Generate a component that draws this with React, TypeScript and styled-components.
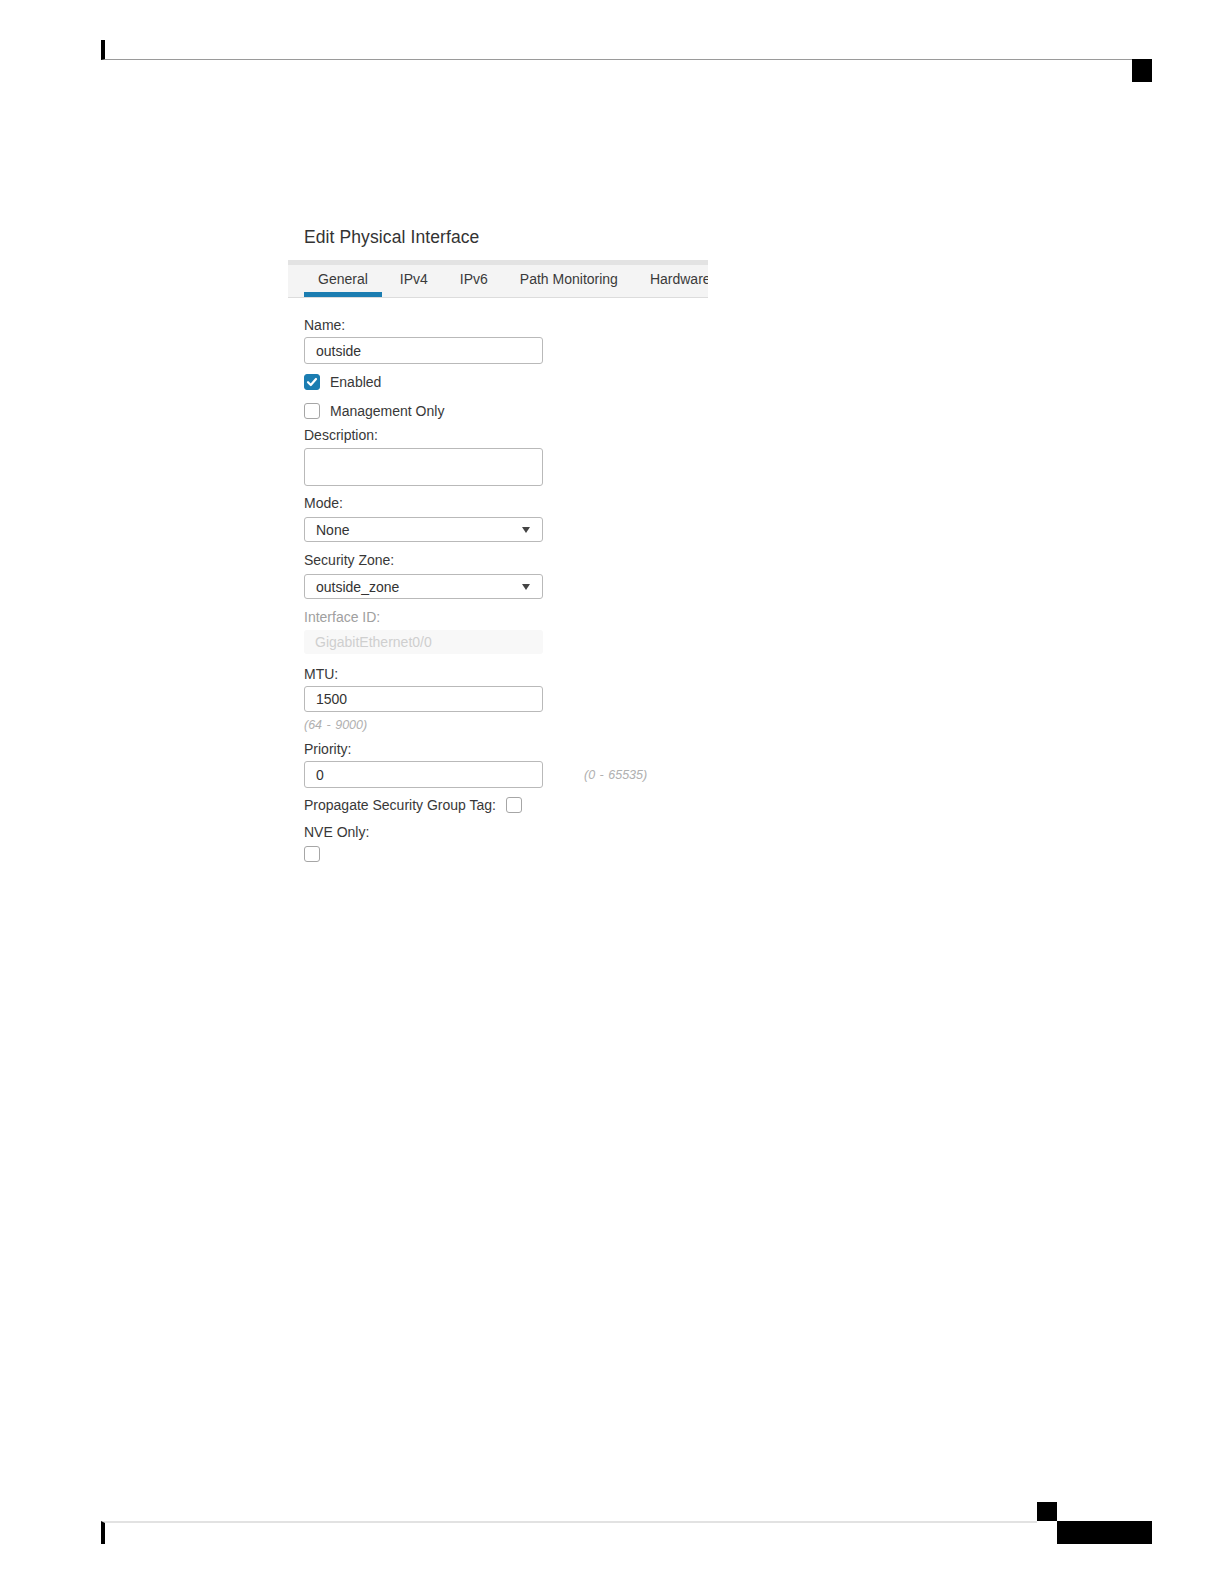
import React from "react";
import styled, { createGlobalStyle } from "styled-components";

const GlobalStyle = createGlobalStyle`
  html, body {
    margin: 0;
    padding: 0;
    background: #ffffff;
  }
  body {
    font-family: "Liberation Sans", Arial, sans-serif;
    color: #333333;
  }
  * { box-sizing: border-box; }
`;

const Page = styled.div`
  width: 1224px;
  min-height: 1584px;
  display: flex;
  flex-direction: column;
`;

const Header = styled.header`
  display: flex;
  align-items: flex-start;
  margin: 40px 72px 0 101px;
`;

const HeaderRule = styled.div`
  flex: 1;
  height: 20px;
  border-left: 4px solid #000;
  border-bottom: 1px solid #9a9a9a;
`;

const HeaderTab = styled.div`
  width: 20px;
  height: 23px;
  margin-top: 19px;
  background: #000;
`;

const Main = styled.main`
  flex: 1;
  padding: 145px 0 0 288px;
`;

const Dialog = styled.section`
  width: 420px;
`;

const Title = styled.h2`
  margin: 0 0 13px 16px;
  font-size: 17.5px;
  line-height: 20px;
  font-weight: 400;
  color: #333;
  letter-spacing: 0.1px;
`;

const TabBar = styled.nav`
  display: flex;
  gap: 4px;
  height: 38px;
  padding-left: 16px;
  background: #f4f4f4;
  border-top: 5px solid #e3e3e3;
  border-bottom: 1px solid #dcdcdc;
  overflow: hidden;
  white-space: nowrap;
`;

const Tab = styled.div<{ $active?: boolean }>`
  flex: none;
  display: flex;
  align-items: center;
  padding: 3px 14px 2px;
  height: 32px;
  font-size: 14px;
  color: #3a3a3a;
  border-bottom: 5px solid ${(p) => (p.$active ? "#1b7db1" : "transparent")};
`;

const Form = styled.div`
  display: flex;
  flex-direction: column;
  align-items: flex-start;
  padding: 19px 0 0 16px;
`;

const Label = styled.div<{ $mt?: number; $muted?: boolean }>`
  margin-top: ${(p) => p.$mt ?? 0}px;
  font-size: 14px;
  line-height: 16px;
  color: ${(p) => (p.$muted ? "#a0a0a0" : "#383838")};
`;

const TextBox = styled.div<{ $mt?: number; $h?: number }>`
  margin-top: ${(p) => p.$mt ?? 4}px;
  width: 239px;
  height: ${(p) => p.$h ?? 27}px;
  display: flex;
  align-items: center;
  padding: 0 11px;
  border: 1px solid #b9b9b9;
  border-radius: 3px;
  background: #fff;
  font-size: 14px;
  color: #333;
`;

const SelectBox = styled(TextBox)`
  justify-content: space-between;
  padding-right: 12px;
`;

const DisabledBox = styled.div<{ $mt?: number }>`
  margin-top: ${(p) => p.$mt ?? 5}px;
  width: 239px;
  height: 24px;
  display: flex;
  align-items: center;
  padding: 0 11px;
  background: #f8f8f8;
  border-radius: 3px;
  font-size: 14px;
  color: #cfcfcf;
`;

const CheckRow = styled.div<{ $mt?: number }>`
  margin-top: ${(p) => p.$mt ?? 0}px;
  display: flex;
  align-items: center;
  gap: 10px;
  font-size: 14px;
  line-height: 16px;
  color: #383838;
`;

const Box = styled.span<{ $checked?: boolean; $mt?: number }>`
  flex: none;
  margin-top: ${(p) => p.$mt ?? 0}px;
  width: 16px;
  height: 16px;
  border-radius: 3px;
  display: inline-flex;
  align-items: center;
  justify-content: center;
  border: 1px solid ${(p) => (p.$checked ? "#1b7db1" : "#a6a6a6")};
  background: ${(p) => (p.$checked ? "#1b7db1" : "#fff")};
`;

const Hint = styled.div<{ $mt?: number }>`
  margin-top: ${(p) => p.$mt ?? 0}px;
  font-size: 12.5px;
  line-height: 14px;
  font-style: italic;
  color: #b0b0b0;
  word-spacing: 1px;
`;

const FieldRow = styled.div<{ $mt?: number }>`
  margin-top: ${(p) => p.$mt ?? 0}px;
  display: flex;
  align-items: center;
  gap: 41px;
  & > ${TextBox} {
    margin-top: 0;
  }
`;

const Footer = styled.footer`
  display: flex;
  align-items: flex-start;
  margin: 0 72px 40px 101px;
`;

const FooterRule = styled.div`
  flex: 1;
  margin-top: 19px;
  height: 23px;
  border-left: 4px solid #000;
  border-top: 2px solid #e2e2e2;
`;

const FooterSquare = styled.div`
  width: 20px;
  height: 19px;
  background: #000;
`;

const FooterBlock = styled.div`
  width: 95px;
  height: 23px;
  margin-top: 19px;
  background: #000;
`;

const Check = () => (
  <svg width="12" height="12" viewBox="0 0 12 12">
    <path d="M2 6.2 L4.8 9 L10 3" fill="none" stroke="#fff" strokeWidth="2.2" strokeLinecap="round" strokeLinejoin="round" />
  </svg>
);

const Caret = () => (
  <svg width="8" height="6" viewBox="0 0 8 6">
    <path d="M0 0 H8 L4 6 Z" fill="#444" />
  </svg>
);

export default function App() {
  return (
    <Page>
      <GlobalStyle />
      <Header>
        <HeaderRule />
        <HeaderTab />
      </Header>
      <Main>
        <Dialog>
          <Title>Edit Physical Interface</Title>
          <TabBar>
            <Tab $active>General</Tab>
            <Tab>IPv4</Tab>
            <Tab>IPv6</Tab>
            <Tab>Path Monitoring</Tab>
            <Tab>Hardware Configuration</Tab>
          </TabBar>
          <Form>
            <Label>Name:</Label>
            <TextBox>outside</TextBox>
            <CheckRow $mt={10}>
              <Box $checked>
                <Check />
              </Box>
              Enabled
            </CheckRow>
            <CheckRow $mt={13}>
              <Box />
              Management Only
            </CheckRow>
            <Label $mt={8}>Description:</Label>
            <TextBox $mt={5} $h={38} />
            <Label $mt={9}>Mode:</Label>
            <SelectBox $mt={6} $h={25}>
              None
              <Caret />
            </SelectBox>
            <Label $mt={10}>Security Zone:</Label>
            <SelectBox $mt={6} $h={25}>
              outside_zone
              <Caret />
            </SelectBox>
            <Label $mt={10} $muted>
              Interface ID:
            </Label>
            <DisabledBox>GigabitEthernet0/0</DisabledBox>
            <Label $mt={12}>MTU:</Label>
            <TextBox $mt={4} $h={26}>
              1500
            </TextBox>
            <Hint $mt={6}>(64 - 9000)</Hint>
            <Label $mt={9}>Priority:</Label>
            <FieldRow $mt={4}>
              <TextBox>0</TextBox>
              <Hint>(0 - 65535)</Hint>
            </FieldRow>
            <CheckRow $mt={9}>
              Propagate Security Group Tag:
              <Box />
            </CheckRow>
            <Label $mt={11}>NVE Only:</Label>
            <Box $mt={6} />
          </Form>
        </Dialog>
      </Main>
      <Footer>
        <FooterRule />
        <FooterSquare />
        <FooterBlock />
      </Footer>
    </Page>
  );
}
